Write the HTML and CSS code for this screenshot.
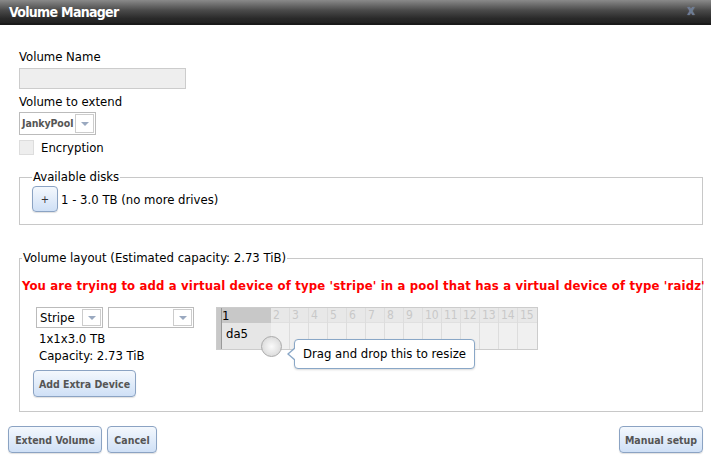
FILE: index.html
```html
<!DOCTYPE html>
<html>
<head>
<meta charset="utf-8">
<link rel="stylesheet" href="styles.css">
</head>
<body>
<div class="dialog">
  <div class="titlebar">
    <span class="title">Volume Manager</span>
    <span class="close">X</span>
  </div>
  <div class="content">
    <div class="label first">Volume Name</div>
    <div class="textinput"></div>
    <div class="label">Volume to extend</div>
    <div class="select pool"><span class="sel-text bold">JankyPool</span><span class="arrow"><i></i></span></div>
    <div class="check-row"><span class="checkbox"></span><span>Encryption</span></div>

    <fieldset class="fs disks">
      <legend>Available disks</legend>
      <div class="disk-row"><button class="btn plus">+</button><span>1 - 3.0 TB (no more drives)</span></div>
    </fieldset>

    <fieldset class="fs layout">
      <legend>Volume layout (Estimated capacity: 2.73 TiB)</legend>
      <div class="warn">You are trying to add a virtual device of type 'stripe' in a pool that has a virtual device of type 'raidz'</div>
      <div class="vdev">
        <div class="vdev-left">
          <div class="selects">
            <div class="select stripe"><span class="sel-text">Stripe</span><span class="arrow"><i></i></span></div>
            <div class="select blank"><span class="sel-text"></span><span class="arrow"><i></i></span></div>
          </div>
          <div class="info">1x1x3.0 TB</div>
          <div class="info">Capacity: 2.73 TiB</div>
          <button class="btn extra">Add Extra Device</button>
        </div>
        <div class="grid-wrap">
          <div class="grid">
            <div class="strip"></div>
            <div class="cols">
              <div class="col c1"><div class="hd">1</div><div class="bd">da5</div></div>
              <div class="col"><div class="hd">2</div><div class="bd"></div></div>
              <div class="col"><div class="hd">3</div><div class="bd"></div></div>
              <div class="col"><div class="hd">4</div><div class="bd"></div></div>
              <div class="col"><div class="hd">5</div><div class="bd"></div></div>
              <div class="col"><div class="hd">6</div><div class="bd"></div></div>
              <div class="col"><div class="hd">7</div><div class="bd"></div></div>
              <div class="col"><div class="hd">8</div><div class="bd"></div></div>
              <div class="col"><div class="hd">9</div><div class="bd"></div></div>
              <div class="col"><div class="hd">10</div><div class="bd"></div></div>
              <div class="col"><div class="hd">11</div><div class="bd"></div></div>
              <div class="col"><div class="hd">12</div><div class="bd"></div></div>
              <div class="col"><div class="hd">13</div><div class="bd"></div></div>
              <div class="col"><div class="hd">14</div><div class="bd"></div></div>
              <div class="col"><div class="hd">15</div><div class="bd"></div></div>
            </div>
          </div>
          <div class="handle"></div>
          <div class="tooltip">Drag and drop this to resize</div>
        </div>
      </div>
    </fieldset>
  </div>
  <div class="footer">
    <div class="left-btns">
      <button class="btn foot extend">Extend Volume</button>
      <button class="btn foot cancel">Cancel</button>
    </div>
    <button class="btn foot manual">Manual setup</button>
  </div>
</div>
</body>
</html>
```

FILE: styles.css
```css
* { box-sizing: border-box; }
html, body { margin: 0; padding: 0; background: #fff; }
body {
  font-family: "DejaVu Sans Condensed", "DejaVu Sans", sans-serif;
  font-size: 13px;
  color: #000;
  width: 711px;
  height: 464px;
  overflow: hidden;
}
.dialog { width: 711px; }
.titlebar {
  height: 25px;
  background: linear-gradient(#8a8a8a 0%, #4a4a4a 45%, #2a2a2a 80%, #222 100%);
  border-bottom: 2px solid #1a1a1a;
  display: flex;
  align-items: center;
  justify-content: space-between;
  padding: 0 16px 0 9px;
}
.title { color: #fff; font-weight: bold; font-size: 14px; letter-spacing: -0.7px; }
.close { color: #6a7c94; font-weight: bold; font-size: 11px; text-shadow: 0 0 1px #99a; }
.content { padding: 0 8px 0 19px; }
.label { height: 16px; line-height: 16px; margin-top: 5px; }
.label.first { margin-top: 24px; }
.textinput {
  width: 167px; height: 21px; margin-top: 3px;
  background: #eee; border: 1px solid #ccc;
}
.select {
  display: inline-flex; height: 23px; border: 1px solid #bbb; background: #fff;
  margin-top: 2px;
}
.sel-text { padding: 0 3px; line-height: 21px; flex: 1; white-space: nowrap; }
.sel-text.bold { font-weight: bold; font-size: 10.5px; letter-spacing: -0.1px; color: #555; padding: 0 2px; }
.arrow {
  width: 19px; flex: none; margin: 1px 1px 1px 0;
  background: #fff; display: flex; align-items: center; justify-content: center;
  border: 1px solid #ccc;
}
.arrow i {
  width: 0; height: 0; border-left: 4px solid transparent; border-right: 4px solid transparent;
  border-top: 4px solid #9aa9c0;
}
.check-row { display: flex; align-items: center; gap: 7px; margin-top: 4px; height: 16px; }
.checkbox { width: 15px; height: 15px; background: #eee; border: 1px solid #ddd; }
.fs {
  border: 1px solid #c8c8c8; margin: 0; padding: 0 12px;
  min-width: 0;
}
.fs legend { padding: 0 1px; line-height: 14px; }
.disks { margin-top: 15px; height: 55px; }
.disk-row { display: flex; align-items: center; gap: 3px; margin-top: 2px; }
.btn {
  font-family: inherit; font-weight: bold; font-size: 10.5px; color: #555;
  background: linear-gradient(#f4f8fd, #cfe0f6);
  border: 1px solid #8ba3c3; border-radius: 4px;
  box-shadow: 0 1px 1px rgba(0,0,0,0.12);
  padding: 0; cursor: pointer;
}
.plus { width: 26px; height: 26px; padding: 0; font-weight: normal; color: #333; font-size: 11px; }
.layout { margin-top: 26px; height: 161px; padding: 0 15px 0 2px; }
.warn { color: #ff0000; font-weight: bold; font-size: 13px; letter-spacing: 0.15px; margin-top: 13px; white-space: nowrap; }
.vdev { display: flex; margin-top: 14px; padding-left: 14px; }
.vdev-left { width: 180px; }
.selects { display: flex; gap: 5px; }
.selects .select { margin-top: 0; height: 21px; }
.selects .sel-text { line-height: 19px; }
.stripe { width: 67px; }
.blank { width: 86px; }
.info { line-height: 17px; margin-top: 0; padding-left: 3px; }
.selects + .info { margin-top: 2px; }
.extra { height: 27px; margin-top: 6px; width: 103px; margin-left: -3px; }
.grid-wrap { position: relative; margin-left: 0; }
.grid { display: flex; border: 1px solid #ccc; height: 43px; }
.strip { width: 5px; background: #c8c8c8; border-right: 1px solid #999; }
.cols { display: flex; }
.col { width: 19px; border-right: 1px solid #ddd; display: flex; flex-direction: column; font-size: 12px; }
.col:last-child { border-right: none; }
.col .hd { height: 15px; line-height: 15px; background: #e8e8e8; color: #c8c8c8; padding-left: 2px; border-bottom: 1px solid #e0e0e0; }
.col .bd { flex: 1; background: #f0f0f0; }
.col.c1 { width: 49px; border-right: none; font-size: 13px; }
.col.c1 .hd { background: #c8c8c8; color: #000; padding-left: 0; border-bottom: none; }
.col.c1 .bd { background: #e6e6e6; padding: 3px 0 0 4px; line-height: 16px; }
.handle {
  position: absolute; left: 45px; top: 29px; width: 21px; height: 21px; border-radius: 50%;
  background: radial-gradient(circle at 50% 50%, #fafafa 0%, #e4e4e4 55%, #cfcfcf 100%);
  border: 1px solid #aaa;
}
.tooltip {
  position: absolute; left: 78px; top: 32px; white-space: nowrap;
  background: #fff; border: 1px solid #89a7c7; border-radius: 4px;
  padding: 0 8px; height: 30px; line-height: 28px;
  box-shadow: 0 1px 2px rgba(0,0,0,0.15);
}
.tooltip::before {
  content: ""; position: absolute; left: -8px; top: 7px;
  border-top: 7px solid transparent; border-bottom: 7px solid transparent; border-right: 8px solid #89a7c7;
}
.tooltip::after {
  content: ""; position: absolute; left: -6px; top: 8px;
  border-top: 6px solid transparent; border-bottom: 6px solid transparent; border-right: 7px solid #fff;
}
.footer { display: flex; justify-content: space-between; padding: 14px 8px 0 8px; }
.left-btns { display: flex; gap: 5px; }
.foot { height: 27px; }
.extend { width: 94px; }
.cancel { width: 50px; }
.manual { width: 84px; }
```
